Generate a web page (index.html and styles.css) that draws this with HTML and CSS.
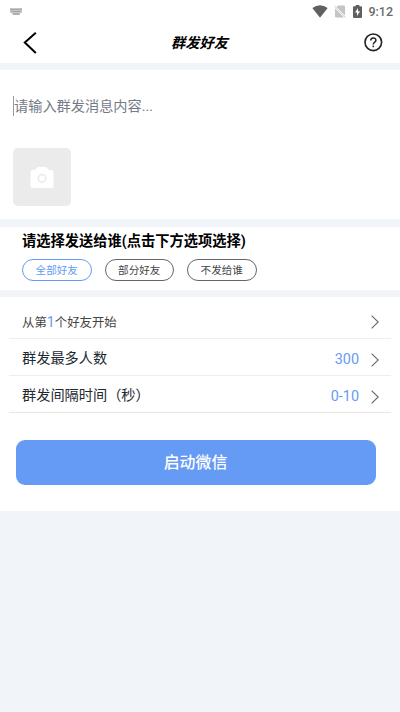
FILE: index.html
```html
<!DOCTYPE html>
<html lang="zh-CN">
<head>
<meta charset="utf-8">
<title>群发好友</title>
<link rel="stylesheet" href="styles.css">
</head>
<body>
<div class="statusbar">
  <svg class="keyboard" width="12" height="7" viewBox="0 0 12 7"><path d="M0 0h12v4.500l-2 1V7H2.500V5.500L0 4.500z" fill="#c6c6c6"/><path d="M.5 1.500h11M1.500 3.500h10" stroke="#888" stroke-dasharray="1 1"/><path d="M3 6h6" stroke="#999"/></svg>
  <div class="indicators">
    <svg class="wifi" width="16" height="13" viewBox="0 0 16 13"><path d="M.3 3Q8-2.5 15.7 3L8 12.8z" fill="#606060"/></svg>
    <svg class="sim" width="12" height="13" viewBox="0 0 12 13"><path d="M4 .5h6q1 0 1 1v9L2.500 2zM1 3.200l9 9.300H2q-1 0-1-1z" fill="#c4c4c4"/><path d="M.3 .8l11.200 11.700" stroke="#c4c4c4" stroke-width=".8"/></svg>
    <svg class="battery" width="9" height="13" viewBox="0 0 9 13"><path d="M2.7 0h3.6v1.3H8q1 0 1 1V12q0 1-1 1H1q-1 0-1-1V2.3q0-1 1-1h1.7z" fill="#606060"/><path d="M5 3L2 7.5h2V11l3-4.8H5z" fill="#fff"/></svg>
    <span class="time">9:12</span>
  </div>
</div>
<header class="navbar">
  <svg class="back" width="14" height="22" viewBox="0 0 14 22"><path d="M12.800 .8L1.800 10.500l11 10.500" fill="none" stroke="#000" stroke-width="2"/></svg>
  <h1 class="title">群发好友</h1>
  <svg class="help" width="20" height="20" viewBox="0 0 20 20" fill="none" stroke="#222"><circle cx="10.300" cy="9.300" r="8.3" stroke-width="1.6"/><path d="M7.700 7.600c0-3.600 5.300-3.500 5.200-.2C12.800 9.300 10.300 9.300 10.300 11.500" stroke-width="1.5"/><path d="M10.300 12.600v1.600" stroke-width="1.6"/></svg>
</header>
<section class="compose">
  <div class="input">请输入群发消息内容...</div>
  <div class="photo">
    <svg width="24" height="22" viewBox="0 0 24 22"><path d="M2.5 4H5l2-2.5Q7.400 1 8 1h8q.6 0 1 .5L18.500 4h3q2 0 2 2v14q0 2-2 2h-19q-2 0-2-2V6q0-2 2-2z" fill="#fff"/><circle cx="12" cy="12.400" r="3.700" fill="none" stroke="#ebebeb" stroke-width="1.700"/></svg>
  </div>
</section>
<section class="audience">
  <h2 class="heading">请选择发送给谁(点击下方选项选择)</h2>
  <div class="pills">
    <span class="pill active">全部好友</span>
    <span class="pill">部分好友</span>
    <span class="pill">不发给谁</span>
  </div>
</section>
<section class="settings">
  <div class="row first">
    <span class="label">从第<b class="num">1</b>个好友开始</span>
    <svg class="chev" width="8" height="14" viewBox="0 0 8 14"><path d="M.6.6L7.200 7 .6 13.400"/></svg>
  </div>
  <div class="row">
    <span class="label">群发最多人数</span>
    <span class="value">300</span>
    <svg class="chev" width="8" height="14" viewBox="0 0 8 14"><path d="M.6.6L7.200 7 .6 13.400"/></svg>
  </div>
  <div class="row last">
    <span class="label">群发间隔时间（秒）</span>
    <span class="value">0-10</span>
    <svg class="chev" width="8" height="14" viewBox="0 0 8 14"><path d="M.6.6L7.200 7 .6 13.400"/></svg>
  </div>
  <div class="launch">启动微信</div>
</section>
</body>
</html>
```
FILE: styles.css
```css
* { box-sizing: border-box; }
body {
  margin: 0;
  min-height: 712px;
  background: #f1f5f9;
  font-family: Roboto, "Noto Sans CJK SC", sans-serif;
  color: #222831;
}
svg { display: block; flex: none; }
.statusbar {
  height: 22px;
  padding: 0 7px 0 10px;
  background: #fff;
  display: flex;
  align-items: center;
  justify-content: space-between;
}
.indicators { display: flex; align-items: center; }
.sim { margin-left: 6px; }
.battery { margin-left: 7px; }
.time { margin-left: 6px; font-size: 12.5px; line-height: 22px; padding-top: 1px; height: 22px; font-weight: 500; color: #6b6b6b; }
.navbar {
  height: 41px;
  padding: 0 17px 0 23px;
  background: #fff;
  display: grid;
  grid-template-columns: 20px 1fr 20px;
  align-items: center;
}
.title {
  margin: 0;
  padding-right: 7px;
  text-align: center;
  font-size: 14.2px;
  line-height: 22px;
  font-weight: 700;
  font-style: italic;
  color: #000;
}
.compose { margin-top: 7px; height: 149px; padding: 26px 13px 0; background: #fff; }
.input {
  height: 20px;
  border-left: 1px solid #999;
  font-size: 14.2px;
  line-height: 21px;
  color: #747b87;
}
.photo {
  width: 58px;
  height: 58px;
  margin-top: 32px;
  border-radius: 5px;
  background: #ebebeb;
  display: flex;
  align-items: center;
  justify-content: center;
}
.audience { margin-top: 8px; height: 63px; padding: 4px 22px 0; background: #fff; }
.heading { margin: 0; font-size: 14.25px; line-height: 20px; font-weight: 700; color: #000; }
.pills { display: flex; gap: 13px; margin-top: 8px; }
.pill {
  width: 69.5px;
  height: 22px;
  border: 1px solid #666;
  border-radius: 11px;
  font-size: 10.6px;
  line-height: 21px;
  text-align: center;
  color: #444;
}
.active { border-color: #659af5; color: #659af5; }
.settings { margin-top: 7px; height: 214px; padding: 0 9px; background: #fff; }
.row {
  height: 37px;
  padding: 0 12px 0 13px;
  border-bottom: 1px solid #eee;
  display: flex;
  align-items: center;
  font-size: 14.2px;
  line-height: 20px;
}
.first { height: 42px; padding-top: 9px; font-size: 12.4px; color: #444; }
.first .label { padding-top: 1px; }
.last { border-color: #e6e6e6; }
.row:not(.first) .label { padding-top: 1px; }
.label { flex: 1; }
.num { font-size: 14.2px; line-height: 18px; font-weight: 400; color: #659af5; }
.value { margin-right: 12px; padding-top: 5px; font-size: 14.4px; color: #659af5; }
.chev { fill: none; stroke: #666; stroke-width: 1.1; }
.row:not(.first) .chev { margin-top: 5px; }
.launch {
  width: 360px;
  height: 44.5px;
  margin: 27px 0 0 6.500px;
  border-radius: 9px;
  background: #659af5;
  color: #fff;
  font-size: 15.9px;
  line-height: 46px;
  font-weight: 500;
  text-align: center;
}
```
